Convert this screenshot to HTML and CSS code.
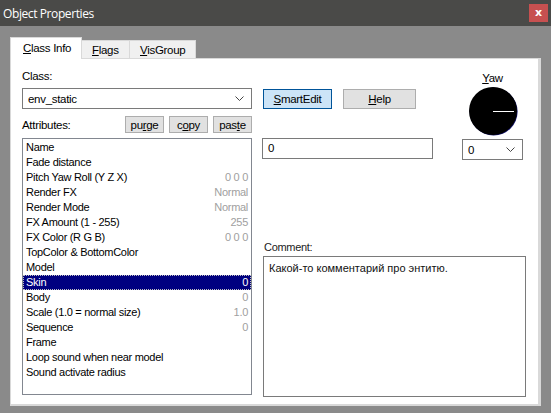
FILE: index.html
```html
<!DOCTYPE html>
<html lang="en">
<head>
  <meta charset="UTF-8" />
  <title>Object Properties</title>
  <link rel="stylesheet" href="styles.css">
</head>
<body>

<div class="window">
  <div class="titlebar">
    <span class="title">Object Properties</span>
    <span class="close">x</span>
  </div>

  <div class="client">
    <div class="tabs">
      <div class="tab active"><u>C</u>lass Info</div>
      <div class="tab"><u>F</u>lags</div>
      <div class="tab"><u>V</u>isGroup</div>
    </div>

    <div class="panel">
      <div class="left">
        <div class="label">Class:</div>
        <div class="combo class-combo">
          <span>env_static</span>
          <svg class="chev" width="9" height="5" viewBox="0 0 9 5"><polyline points="0.5,0.5 4.5,4.5 8.5,0.5" fill="none" stroke="#444" stroke-width="1"/></svg>
        </div>
        <div class="attr-row">
          <span class="label">Attributes:</span>
          <div class="small-btns">
            <button class="btn small">pu<u>r</u>ge</button>
            <button class="btn small">c<u>o</u>py</button>
            <button class="btn small">pas<u>t</u>e</button>
          </div>
        </div>
        <div class="list">
          <div class="row"><span>Name</span></div>
          <div class="row"><span>Fade distance</span></div>
          <div class="row"><span>Pitch Yaw Roll (Y Z X)</span><span class="val">0 0 0</span></div>
          <div class="row"><span>Render FX</span><span class="val">Normal</span></div>
          <div class="row"><span>Render Mode</span><span class="val">Normal</span></div>
          <div class="row"><span>FX Amount (1 - 255)</span><span class="val">255</span></div>
          <div class="row"><span>FX Color (R G B)</span><span class="val">0 0 0</span></div>
          <div class="row"><span>TopColor &amp; BottomColor</span></div>
          <div class="row"><span>Model</span></div>
          <div class="row selected"><span>Skin</span><span class="val">0</span></div>
          <div class="row"><span>Body</span><span class="val">0</span></div>
          <div class="row"><span>Scale (1.0 = normal size)</span><span class="val">1.0</span></div>
          <div class="row"><span>Sequence</span><span class="val">0</span></div>
          <div class="row"><span>Frame</span></div>
          <div class="row"><span>Loop sound when near model</span></div>
          <div class="row"><span>Sound activate radius</span></div>
        </div>
      </div>

      <div class="right">
        <div class="top">
          <div class="edit-area">
            <div class="big-btns">
              <button class="btn big smart"><u>S</u>martEdit</button>
              <button class="btn big help"><u>H</u>elp</button>
            </div>
            <div class="edit">0</div>
          </div>
          <div class="yaw">
            <div class="yaw-label"><u>Y</u>aw</div>
            <svg class="dial" width="50" height="50" viewBox="0 0 50 50">
              <circle cx="25.6" cy="25.6" r="24" fill="#10106a"/>
              <circle cx="25" cy="25" r="24" fill="#000"/>
              <line x1="25" y1="25.5" x2="46" y2="25.5" stroke="#fff" stroke-width="1"/>
            </svg>
            <div class="combo yaw-combo">
              <span>0</span>
              <svg class="chev" width="9" height="5" viewBox="0 0 9 5"><polyline points="0.5,0.5 4.5,4.5 8.5,0.5" fill="none" stroke="#444" stroke-width="1"/></svg>
            </div>
          </div>
        </div>
        <div class="comment-label">Comment:</div>
        <div class="comment">Какой-то комментарий про энтитю.</div>
      </div>
    </div>
  </div>
</div>

</body>
</html>
```

FILE: styles.css
```css
body {
  margin: 0;
  background: #8a8a8a;
  font-family: "Liberation Sans", Arial, sans-serif;
  font-size: 11px;
  letter-spacing: -0.3px;
  color: #000;
}
u {
  text-decoration: underline;
  text-underline-offset: 1px;
}
.window {
  width: 551px;
  height: 413px;
}
.titlebar {
  height: 26px;
  background: #4a4a48;
  display: flex;
  align-items: center;
  justify-content: space-between;
  padding: 0 2px 0 3px;
}
.title {
  color: #fff;
  font-family: "Open Sans", "Noto Sans", sans-serif;
  font-size: 12px;
  letter-spacing: -0.4px;
}
.close {
  width: 19px;
  height: 18px;
  background: #c75050;
  color: #fff;
  font-family: "DejaVu Sans", sans-serif;
  font-weight: bold;
  font-size: 11px;
  text-align: center;
  line-height: 17px;
  margin-right: 1px;
}
.client {
  padding: 12px 10px 0 10px;
}
.tabs {
  display: flex;
  align-items: flex-end;
  height: 20px;
}
.tab {
  height: 18px;
  line-height: 18px;
  padding: 0 0 0 10px;
  background: #f0f0f0;
  border: 1px solid #d9d9d9;
  border-bottom: none;
  box-sizing: border-box;
  font-size: 11.5px;
}
.tab:nth-child(2) { width: 48px; border-left: none; }
.tab:nth-child(3) { width: 66px; border-left: none; }
.tab.active {
  width: 72px;
  height: 22px;
  line-height: 21px;
  background: #fff;
  padding-left: 12px;
  margin-bottom: -1px;
  position: relative;
  z-index: 1;
}
.panel {
  width: 531px;
  height: 348px;
  box-sizing: border-box;
  background: #fff;
  border: 1px solid #d9d9d9;
  border-right-width: 3px;
  border-bottom-width: 2px;
  padding: 10px 0 0 11px;
  display: flex;
  gap: 10px;
}
.left {
  width: 230px;
}
.label {
  line-height: 14px;
  font-size: 11.5px;
}
.combo {
  height: 21px;
  box-sizing: border-box;
  border: 1px solid #7a7a7a;
  display: flex;
  align-items: center;
  justify-content: space-between;
  padding: 0 7px 0 5px;
  font-size: 11.5px;
}
.class-combo {
  margin-top: 5px;
}
.attr-row {
  margin-top: 7px;
  display: flex;
  align-items: center;
  justify-content: space-between;
}
.small-btns {
  display: flex;
  gap: 5px;
}
.btn {
  font-family: inherit;
  font-size: 11.5px;
  letter-spacing: -0.3px;
  background: #e1e1e1;
  border: 1px solid #adadad;
  padding: 0;
  color: #000;
}
.btn.small {
  width: 39px;
  height: 17px;
  line-height: 14px;
}
.list {
  margin-top: 5px;
  height: 257px;
  box-sizing: border-box;
  border: 1px solid #828790;
  padding-top: 1px;
}
.row {
  height: 15px;
  line-height: 15px;
  display: flex;
  justify-content: space-between;
  padding: 0 3px;
  font-size: 11px;
}
.val {
  color: #a0a0a0;
}
.row.selected {
  background: #000080;
  color: #fff;
  outline: 1px dotted #c0c0c0;
  outline-offset: -1px;
}
.row.selected .val {
  color: #fff;
}
.right {
  width: 264px;
}
.top {
  display: flex;
  justify-content: space-between;
}
.big-btns {
  margin-top: 20px;
  display: flex;
  gap: 11px;
  padding-left: 1px;
}
.btn.big {
  height: 20px;
}
.btn.smart {
  width: 69px;
  background: #cce4f7;
  border-color: #005499;
}
.btn.help {
  width: 73px;
}
.edit {
  margin-top: 29px;
  width: 171px;
  height: 21px;
  box-sizing: border-box;
  border: 1px solid #7a7a7a;
  padding-left: 5px;
  line-height: 19px;
  font-size: 11.5px;
}
.yaw {
  width: 61px;
  margin-right: 3px;
  display: flex;
  flex-direction: column;
  align-items: center;
}
.yaw-label {
  margin-top: 2px;
  line-height: 14px;
  font-size: 11.5px;
}
.dial {
  display: block;
  margin-top: 1px;
  margin-left: 1px;
}
.yaw-combo {
  width: 61px;
  margin-top: 3px;
}
.comment-label {
  margin-top: 80px;
  line-height: 14px;
  padding-left: 2px;
  color: #222;
}
.comment {
  margin-top: 2px;
  margin-left: 1px;
  width: 263px;
  height: 141px;
  box-sizing: border-box;
  border: 1px solid #7a7a7a;
  padding: 5px 5px;
  font-size: 11px;
  letter-spacing: 0;
  color: #111;
}
```
